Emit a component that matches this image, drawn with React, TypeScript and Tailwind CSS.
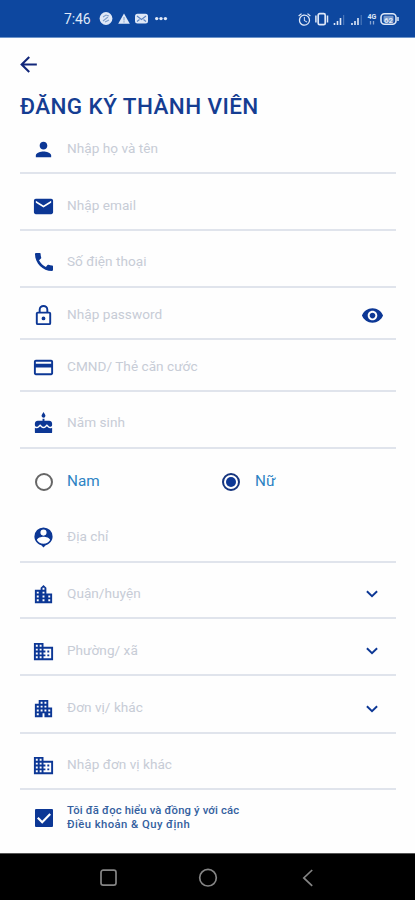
import React from "react";
import {
  MdApartment, MdArrowBack, MdBusiness, MdCake, MdCall, MdEmail,
  MdLocationCity, MdPerson, MdVisibility, MdAlarm,
} from "react-icons/md";

type IconProps = { size?: number };

function LockIcon({ size = 23 }: IconProps) {
  return (
    <svg width={size} height={size} viewBox="0 0 24 24" fill="currentColor">
      <path d="M12 17a2 2 0 0 1 0-4 2 2 0 0 1 0 4m6 3V10H6v10h12m0-12a2 2 0 0 1 2 2v10a2 2 0 0 1-2 2H6a2 2 0 0 1-2-2V10c0-1.1.9-2 2-2h1V6a5 5 0 0 1 10 0v2h1m-6-5a3 3 0 0 0-3 3v2h6V6a3 3 0 0 0-3-3z" />
    </svg>
  );
}

function CardIcon({ size = 24 }: IconProps) {
  return (
    <svg width={size} height={size} viewBox="0 0 24 24" fill="currentColor">
      <path d="M20 4H4c-1.100 0-2 .9-2 2v12c0 1.100.9 2 2 2h16c1.100 0 2-.9 2-2V6c0-1.100-.9-2-2-2m0 14H4v-6h16v6m0-10H4V6h16v2z" />
    </svg>
  );
}

function AddressIcon({ size = 23 }: IconProps) {
  return (
    <svg width={size} height={size} viewBox="0 0 24 24" fill="currentColor">
      <path
        fillRule="evenodd"
        d="M12 1.500a9.500 9.500 0 0 0-9.500 9.500c0 4.400 3 8 7.200 9.100L12 22.500l2.300-2.400c4.200-1.100 7.200-4.700 7.200-9.100A9.500 9.500 0 0 0 12 1.500m0 2.200a3.200 3.200 0 0 1 0 6.400 3.200 3.200 0 0 1 0-6.400m0 14.900c-3 0-5.600-1.500-6.900-3.900.2-2.300 4.500-3.500 6.900-3.500s6.700 1.200 6.900 3.500c-1.300 2.400-3.900 3.900-6.900 3.900z"
      />
    </svg>
  );
}

function CheckIcon() {
  return (
    <svg width="18" height="18" viewBox="0 0 18 18">
      <rect x="0" y="0" width="18" height="18" rx="1" fill="currentColor" />
      <path d="M2.800 8.800l4.400 4.400L15.200 5" fill="none" stroke="#fff" strokeWidth="2.200" />
    </svg>
  );
}

function StatusBar() {
  return (
    <div className="flex h-[37px] shrink-0 items-center justify-between bg-[#0d479f] pl-[64px] pr-[15px] pt-[1px] text-[#dfe8f7]">
      <div className="flex items-center">
        <span className="w-[27px] text-[14px] tracking-[-0.1px] whitespace-nowrap">7:46</span>
        <svg className="ml-2" width="70" height="14" viewBox="0 0 70 14" fill="currentColor">
          <circle cx="7" cy="6.500" r="6.400" />
          <path d="M4 5l3-2 3 1M4 9l5-4M6 10l4-2" stroke="#7f9fcb" strokeWidth="1.100" fill="none" />
          <path d="M25 1.500l5.800 10.200H19.200z" />
          <path d="M25 5v3.500M25 9.300v1.200" stroke="#7f9fcb" strokeWidth="1.100" />
          <rect x="36" y="1.800" width="13" height="9.600" rx="2.500" />
          <path d="M38 4l4.500 3.500L47 4M38 9.500l2.500-2M47 9.500l-2.500-2" stroke="#5b83bf" strokeWidth="1.100" fill="none" />
          <circle cx="57.700" cy="6.600" r="1.700" />
          <circle cx="62" cy="6.600" r="1.700" />
          <circle cx="66.400" cy="6.600" r="1.700" />
        </svg>
      </div>
      <div className="flex items-center">
        <MdAlarm size={15} />
        <svg width="88" height="16" viewBox="0 0 88 16" fill="none" stroke="currentColor">
          <rect x="6.200" y="2.700" width="7" height="11" rx="1.500" strokeWidth="1.700" />
          <path d="M3.900 4.500v7M15.500 4.500v7" strokeWidth="1.500" />
          <path d="M22.500 14v-2M25.500 14v-4M28.500 14V7M40 14v-2M43 14v-4M46 14V7" strokeWidth="1.600" />
          <path d="M31.700 14V4M49.200 14V4" strokeWidth="1" opacity=".35" />
          <rect x="69" y="2.800" width="15" height="10.500" rx="3.500" strokeWidth="1.600" />
          <rect x="71.500" y="4.800" width="10" height="6.500" rx="1" fill="currentColor" stroke="none" opacity=".5" />
          <path d="M86 6v4" strokeWidth="1.500" />
          <text x="55.500" y="8" fontSize="7" fontWeight="700" fill="currentColor" stroke="none">4G</text>
          <path d="M58.500 10v3.500M61.500 10v3.500" strokeWidth="1.300" opacity=".6" />
          <text x="72" y="11.500" fontSize="8" fontWeight="700" fill="currentColor" stroke="none">62</text>
        </svg>
      </div>
    </div>
  );
}

function Chevron() {
  return (
    <svg width="12" height="8" viewBox="0 0 12 8" fill="none" stroke="currentColor" strokeWidth="1.900">
      <path d="M.9 1.200L6 6.200l5.100-5" />
    </svg>
  );
}

type FieldProps = {
  icon: React.ReactNode;
  label: string;
  height: string;
  raised?: boolean;
  end?: React.ReactNode;
};

function Field({ icon, label, height, raised = false, end }: FieldProps) {
  return (
    <div className={`ml-5 mr-[19px] flex shrink-0 items-end border-b-2 border-[#e0e4ec] pr-[12px] text-[#0c3795] ${height}`}>
      <div className={`flex w-[47px] justify-center ${raised ? "mb-[12px]" : "mb-[11px]"}`}>{icon}</div>
      <span className={`flex-1 text-[13.600px] leading-[18px] tracking-[0.03px] text-[#c7ccd6] ${raised ? "mb-[16px]" : "mb-[15px]"}`}>
        {label}
      </span>
      {end && <div className="mb-[11px] flex h-[24px] w-[24px] items-center justify-center">{end}</div>}
    </div>
  );
}

export default function App() {
  return (
    <div className="flex h-[900px] w-[415px] flex-col overflow-hidden bg-[#fefefe] font-['Roboto','Noto_Sans',sans-serif]">
      <StatusBar />
      <div className="h-px shrink-0 bg-[#6c94ca]" />
      <div className="flex h-[53px] shrink-0 items-center pl-[16px] text-[#12277a]">
        <MdArrowBack size={25} />
      </div>
      <h1 className="h-[30px] shrink-0 pl-[20px] text-[22.500px] font-medium leading-[30px] tracking-[0.400px] whitespace-nowrap text-[#153d92]">
        ĐĂNG KÝ THÀNH VIÊN
      </h1>
      <Field height="h-[53px]" icon={<MdPerson size={23} />} label="Nhập họ và tên" />
      <Field height="h-[57px]" icon={<MdEmail size={23} />} label="Nhập email" />
      <Field height="h-[57px]" icon={<MdCall size={24} />} label="Số điện thoại" raised />
      <Field height="h-[52px]" icon={<LockIcon />} label="Nhập password" end={<MdVisibility size={23} />} />
      <Field height="h-[52px]" icon={<CardIcon size={23} />} label="CMND/ Thẻ căn cước" />
      <Field height="h-[57px]" icon={<MdCake size={23} />} label="Năm sinh" raised />
      <div className="mx-5 flex h-[65px] shrink-0 items-center text-[15.300px] text-[#2d83c4]">
        <div className="flex w-[47px] justify-center">
          <div className="h-[18px] w-[18px] rounded-full border-2 border-[#666]" />
        </div>
        <span className="w-[141px]">Nam</span>
        <div className="flex w-[46px] justify-center">
          <div className="flex h-[18px] w-[18px] items-center justify-center rounded-full border-2 border-[#16357e]">
            <div className="h-[10px] w-[10px] rounded-full bg-[#0c3795]" />
          </div>
        </div>
        <span className="pl-px">Nữ</span>
      </div>
      <Field height="h-[49px]" icon={<AddressIcon />} label="Địa chỉ" raised />
      <Field height="h-[56px]" icon={<MdLocationCity size={23} />} label="Quận/huyện" end={<Chevron />} />
      <Field height="h-[57px]" icon={<MdBusiness size={23} />} label="Phường/ xã" end={<Chevron />} />
      <Field height="h-[58px]" icon={<MdApartment size={23} />} label="Đơn vị/ khác" raised end={<Chevron />} />
      <Field height="h-[56px]" icon={<MdBusiness size={23} />} label="Nhập đơn vị khác" />
      <div className="mx-5 flex h-[55px] shrink-0 items-center text-[#0c3795]">
        <div className="flex w-[47px] justify-center"><CheckIcon /></div>
        <p className="text-[11.300px] font-medium leading-[13.500px] tracking-[0.140px] text-[#34609f]">
          Tôi đã đọc hiểu và đồng ý với các<br />
          <span className="tracking-[0.430px]">Điều khoản &amp; Quy định</span>
        </p>
      </div>
      <div className="mt-auto flex h-[47px] shrink-0 items-center justify-center border-t border-[#555] bg-black pt-[1px] text-[#858585]">
        <svg width="216" height="20" viewBox="0 0 216 20" fill="none" stroke="currentColor" strokeWidth="1.700">
          <rect x="1" y="2.200" width="15" height="15" rx="2.200" />
          <circle cx="108" cy="9.700" r="8.300" />
          <path d="M212.200 2l-8.400 7.900 8.400 7.900" />
        </svg>
      </div>
    </div>
  );
}
